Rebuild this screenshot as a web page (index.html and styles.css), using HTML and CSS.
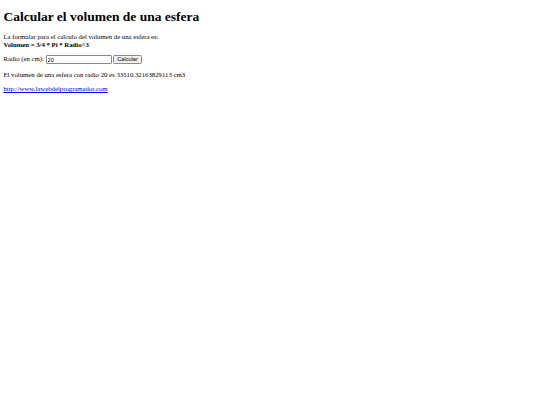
FILE: index.html
```html
<!DOCTYPE html>
<html>
<head>
<meta charset="utf-8">
<title>Calcular el volumen de una esfera</title>
<link rel="stylesheet" href="styles.css">
</head>
<body class="page">
<h1 class="title">Calcular el volumen de una esfera</h1>
<p class="text">La formular para el calculo del volumen de una esfera es:<br><b>Volumen = 3/4 * Pi * Radio^3</b></p>
<form class="text">Radio (en cm): <input class="field" type="text" value="20"> <button class="btn" type="button">Calcular</button></form>
<p class="text">El volumen de una esfera con radio 20 es 33510.32163829113 cm3</p>
<p class="text"><a class="link" href="#">http://www.lawebdelprogramador.com</a></p>
</body>
</html>
```
FILE: styles.css
```css
html { background: #fff; }
.page { margin: 3.4px; font-family: "Liberation Serif", serif; font-size: 6.75px; line-height: 1.15; color: #000; }
.title { font-size: 13.5px; margin: 6px 0 8px; font-weight: bold; line-height: 1.15; }
.text { margin: 6.75px 0; }
.field { font-family: "Liberation Sans", sans-serif; font-size: 5.6px; width: 62px; height: 7px; padding: 0 1px; margin: 0; border: 1px solid #8a8a8a; border-radius: 1px; vertical-align: middle; box-sizing: content-box; }
.btn { font-family: "Liberation Sans", sans-serif; font-size: 5.6px; height: 9px; padding: 0 3px; margin: 0; border: 1px solid #8a8a8a; border-radius: 1.5px; background: #efefef; vertical-align: middle; line-height: 1; }
.link { color: #0000ee; }
```
